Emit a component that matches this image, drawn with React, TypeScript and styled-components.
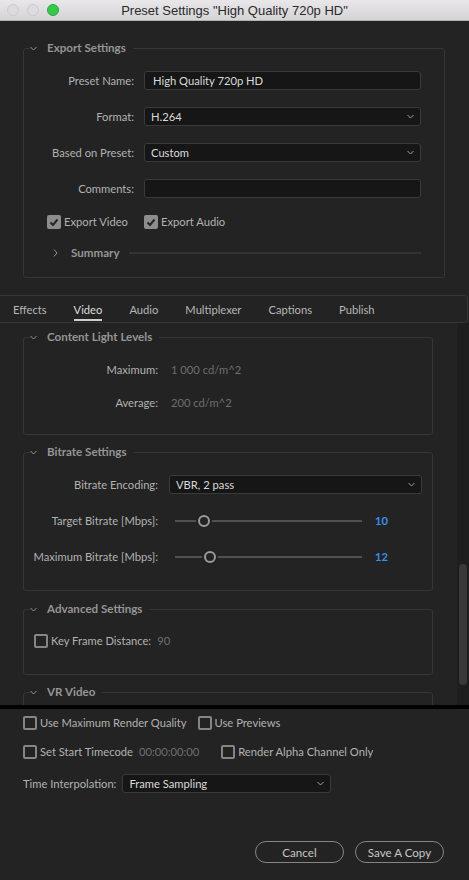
import styled, { createGlobalStyle } from "styled-components";

const GlobalStyle = createGlobalStyle`
  html, body {
    margin: 0;
    padding: 0;
    background: #232323;
  }
  body {
    font-family: Lato, "Liberation Sans", Arial, sans-serif;
  }
`;

const Window = styled.div`
  width: 469px;
  height: 880px;
  display: flex;
  flex-direction: column;
  background: #232323;
  overflow: hidden;
  font-size: 11.2px;
  color: #b2b2b2;
`;

const TitleBar = styled.div`
  height: 21px;
  box-sizing: border-box;
  display: flex;
  align-items: center;
  position: relative;
  background: linear-gradient(#e9e7e9, #d5d3d5);
  border-bottom: 1px solid #b4b2b4;
`;

const Lights = styled.div`
  display: flex;
  gap: 8px;
  padding-left: 7px;
`;

const Light = styled.span<{ $color: string; $edge: string }>`
  width: 12px;
  height: 12px;
  border-radius: 50%;
  box-sizing: border-box;
  background: ${(p) => p.$color};
  border: 1px solid ${(p) => p.$edge};
`;

const Title = styled.div`
  position: absolute;
  left: 0;
  right: 0;
  text-align: center;
  font-family: "Liberation Sans", Arial, sans-serif;
  font-size: 13px;
  color: #2a2a2a;
  pointer-events: none;
`;

const TopPanel = styled.div`
  padding: 20px 24px 0 23px;
`;

const Group = styled.fieldset<{ $top: number; $bottom: number; $gap?: number }>`
  margin: ${(p) => p.$gap ?? 0}px 0 0 0;
  padding: ${(p) => p.$top}px 0 ${(p) => p.$bottom}px 0;
  border: 1px solid #363636;
  border-radius: 3px;
  min-width: 0;
`;

const Legend = styled.legend`
  display: flex;
  align-items: center;
  gap: 10px;
  margin-left: 6px;
  padding: 0 7px 0 0;
  line-height: 14px;
  font-size: 11.6px;
  font-weight: 700;
  color: #959595;
`;

const FormGrid = styled.div<{ $label: number; $gap: number; $right: number; $rowGap: number }>`
  display: grid;
  grid-template-columns: ${(p) => p.$label}px 1fr;
  column-gap: ${(p) => p.$gap}px;
  row-gap: ${(p) => p.$rowGap}px;
  align-items: center;
  padding-right: ${(p) => p.$right}px;
`;

const Label = styled.div`
  text-align: right;
  line-height: 19px;
  white-space: nowrap;
`;

const Field = styled.div<{ $pad?: number }>`
  height: 19px;
  box-sizing: border-box;
  display: flex;
  align-items: center;
  justify-content: space-between;
  padding: 0 6px 0 ${(p) => p.$pad ?? 6}px;
  background: #161616;
  border: 1px solid #3a3a3a;
  border-radius: 3px;
  color: #dadada;
  white-space: nowrap;
`;

const Value = styled.div`
  line-height: 19px;
  color: #6e6e6e;
`;

const CheckCell = styled.div<{ $indent?: number }>`
  display: flex;
  align-items: center;
  padding-left: ${(p) => p.$indent ?? 0}px;
`;

const Option = styled.label`
  display: flex;
  align-items: center;
  gap: 3px;
  line-height: 14px;
  white-space: nowrap;
  color: #b2b2b2;
`;

const Box = styled.span<{ $checked?: boolean }>`
  width: 14px;
  height: 14px;
  flex: none;
  box-sizing: border-box;
  border-radius: 2px;
  display: flex;
  align-items: center;
  justify-content: center;
  background: ${(p) => (p.$checked ? "#8d8d8d" : "transparent")};
  border: ${(p) => (p.$checked ? "none" : "2px solid #858585")};
`;

const Muted = styled.span`
  color: #6e6e6e;
  margin-left: 3px;
`;

const SummaryRow = styled.div`
  grid-column: 1 / span 2;
  display: flex;
  align-items: center;
  padding-left: 29px;
  line-height: 14px;
  font-size: 11.6px;
  font-weight: 700;
  color: #959595;
`;

const SummaryText = styled.span`
  margin-left: 13px;
`;

const Rule = styled.span`
  flex: 1;
  height: 2px;
  margin: 0 0 1px 9px;
  background: #333333;
`;

const TabBar = styled.div`
  margin: 17px 1px 0 0;
  height: 28px;
  box-sizing: border-box;
  display: flex;
  gap: 27px;
  padding-left: 13px;
  border: 1px solid #363636;
  border-left: none;
  border-radius: 0 4px 4px 0;
`;

const Tab = styled.div<{ $active?: boolean }>`
  display: flex;
  flex-direction: column;
  padding-top: 7px;
  line-height: 14px;
  color: ${(p) => (p.$active ? "#dcdcdc" : "#b6b6b6")};
  &::after {
    content: "";
    height: 2px;
    margin-top: 2px;
    background: ${(p) => (p.$active ? "#cfcfcf" : "transparent")};
  }
`;

const ScrollArea = styled.div`
  height: 382px;
  display: flex;
`;

const ScrollContent = styled.div`
  flex: 1;
  overflow: hidden;
  padding: 7px 24px 0 23px;
`;

const Track = styled.div`
  width: 12px;
  box-sizing: border-box;
  padding: 241px 2px 0 2px;
  background: #1e1e1e;
`;

const Thumb = styled.div`
  height: 121px;
  border-radius: 4px;
  background: #393939;
`;

const SliderCell = styled.div`
  display: flex;
  align-items: center;
  height: 19px;
  padding-left: 6px;
`;

const SliderTrack = styled.div`
  width: 187px;
  height: 2px;
  background: #505050;
  position: relative;
`;

const SliderThumb = styled.span`
  position: absolute;
  top: -5px;
  width: 12px;
  height: 12px;
  margin-left: -6px;
  box-sizing: border-box;
  border-radius: 50%;
  border: 2px solid #9a9a9a;
  background: #232323;
  box-shadow: 0 0 0 2px #232323;
`;

const SliderValue = styled.span`
  margin-left: 13px;
  color: #3a8fe8;
  font-weight: 700;
`;

const Separator = styled.div`
  height: 4px;
  background: #000;
`;

const BottomPanel = styled.div`
  flex: 1;
  display: flex;
  flex-direction: column;
  padding: 7px 25px 17px 23px;
`;

const OptionRow = styled.div<{ $gap: number; $mt?: number }>`
  display: flex;
  align-items: center;
  gap: ${(p) => p.$gap}px;
  margin-top: ${(p) => p.$mt ?? 0}px;
`;

const InterpLabel = styled.span`
  white-space: nowrap;
`;

const InterpSelect = styled(Field)`
  width: 209px;
`;

const Footer = styled.div`
  margin-top: auto;
  display: flex;
  justify-content: flex-end;
  gap: 11px;
`;

const Button = styled.button`
  width: 89px;
  height: 22px;
  box-sizing: border-box;
  border: 1.5px solid #858585;
  border-radius: 11px;
  background: transparent;
  color: #c6c6c6;
  font-family: inherit;
  font-size: 11.6px;
  padding: 0;
`;

const Chevron = ({ dir = "down", color = "#959595" }: { dir?: "down" | "right"; color?: string }) =>
  dir === "down" ? (
    <svg width="7" height="5" viewBox="0 0 7 5">
      <polyline points="0.5,1 3.5,4 6.5,1" fill="none" stroke={color} strokeWidth="1" />
    </svg>
  ) : (
    <svg width="5" height="8" viewBox="0 0 5 8">
      <polyline points="1,0.5 4,4 1,7.5" fill="none" stroke={color} strokeWidth="1" />
    </svg>
  );

const CheckBox = ({ checked }: { checked?: boolean }) => (
  <Box $checked={checked}>
    {checked && (
      <svg width="10" height="9" viewBox="0 0 10 9">
        <polyline points="1.5,4.5 4,7 8.5,1.5" fill="none" stroke="#262626" strokeWidth="2" />
      </svg>
    )}
  </Box>
);

const Heading = ({ children }: { children: string }) => (
  <Legend>
    <Chevron />
    {children}
  </Legend>
);

const Slider = ({ value, max }: { value: number; max: number }) => (
  <SliderCell>
    <SliderTrack>
      <SliderThumb style={{ left: `${(value / max) * 100}%` }} />
    </SliderTrack>
    <SliderValue>{value}</SliderValue>
  </SliderCell>
);

const tabs = ["Effects", "Video", "Audio", "Multiplexer", "Captions", "Publish"];

export default function App() {
  return (
    <Window>
      <GlobalStyle />
      <TitleBar>
        <Lights>
          <Light $color="#dddbdd" $edge="#cbc9cb" />
          <Light $color="#dddbdd" $edge="#cbc9cb" />
          <Light $color="#35c84b" $edge="#2aa83d" />
        </Lights>
        <Title>Preset Settings "High Quality 720p HD"</Title>
      </TitleBar>

      <TopPanel>
        <Group $top={16} $bottom={17}>
          <Heading>Export Settings</Heading>
          <FormGrid $label={110} $gap={10} $right={23} $rowGap={17}>
            <Label>Preset Name:</Label>
            <Field $pad={8}>High Quality 720p HD</Field>
            <Label>Format:</Label>
            <Field>
              H.264
              <Chevron color="#a0a0a0" />
            </Field>
            <Label>Based on Preset:</Label>
            <Field>
              Custom
              <Chevron color="#a0a0a0" />
            </Field>
            <Label>Comments:</Label>
            <Field />
            <CheckCell $indent={23}>
              <Option>
                <CheckBox checked />
                Export Video
              </Option>
            </CheckCell>
            <CheckCell>
              <Option>
                <CheckBox checked />
                Export Audio
              </Option>
            </CheckCell>
            <SummaryRow>
              <Chevron dir="right" />
              <SummaryText>Summary</SummaryText>
              <Rule />
            </SummaryRow>
          </FormGrid>
        </Group>
      </TopPanel>

      <TabBar>
        {tabs.map((t) => (
          <Tab key={t} $active={t === "Video"}>
            {t}
          </Tab>
        ))}
      </TabBar>

      <ScrollArea>
        <ScrollContent>
          <Group $top={16} $bottom={22}>
            <Heading>Content Light Levels</Heading>
            <FormGrid $label={134} $gap={13} $right={10} $rowGap={14}>
              <Label>Maximum:</Label>
              <Value>1 000 cd/m^2</Value>
              <Label>Average:</Label>
              <Value>200 cd/m^2</Value>
            </FormGrid>
          </Group>

          <Group $top={16} $bottom={24} $gap={10}>
            <Heading>Bitrate Settings</Heading>
            <FormGrid $label={134} $gap={11} $right={10} $rowGap={17}>
              <Label>Bitrate Encoding:</Label>
              <Field>
                VBR, 2 pass
                <Chevron color="#a0a0a0" />
              </Field>
              <Label>Target Bitrate [Mbps]:</Label>
              <Slider value={10} max={64} />
              <Label>Maximum Bitrate [Mbps]:</Label>
              <Slider value={12} max={64} />
            </FormGrid>
          </Group>

          <Group $top={18} $bottom={26} $gap={11}>
            <Heading>Advanced Settings</Heading>
            <CheckCell $indent={10}>
              <Option>
                <CheckBox />
                Key Frame Distance:
                <Muted>90</Muted>
              </Option>
            </CheckCell>
          </Group>

          <Group $top={18} $bottom={40} $gap={10}>
            <Heading>VR Video</Heading>
          </Group>
        </ScrollContent>
        <Track>
          <Thumb />
        </Track>
      </ScrollArea>

      <Separator />

      <BottomPanel>
        <OptionRow $gap={11}>
          <Option>
            <CheckBox />
            Use Maximum Render Quality
          </Option>
          <Option>
            <CheckBox />
            Use Previews
          </Option>
        </OptionRow>
        <OptionRow $gap={22} $mt={15}>
          <Option>
            <CheckBox />
            Set Start Timecode
            <Muted>00:00:00:00</Muted>
          </Option>
          <Option>
            <CheckBox />
            Render Alpha Channel Only
          </Option>
        </OptionRow>
        <OptionRow $gap={6} $mt={15}>
          <InterpLabel>Time Interpolation:</InterpLabel>
          <InterpSelect>
            Frame Sampling
            <Chevron color="#a0a0a0" />
          </InterpSelect>
        </OptionRow>
        <Footer>
          <Button>Cancel</Button>
          <Button>Save A Copy</Button>
        </Footer>
      </BottomPanel>
    </Window>
  );
}
